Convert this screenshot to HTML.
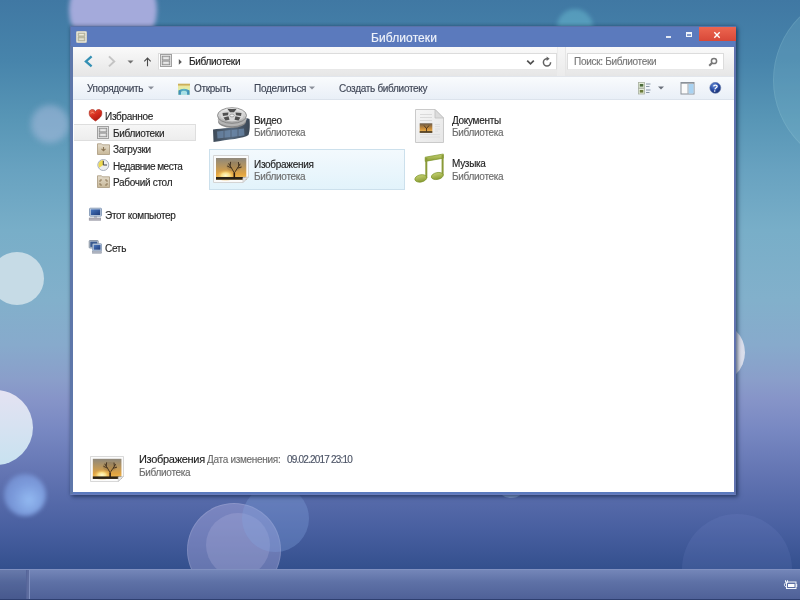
<!DOCTYPE html>
<html><head><meta charset="utf-8">
<style>
*{margin:0;padding:0;box-sizing:border-box}
html,body{width:800px;height:600px;overflow:hidden}
body{position:relative;font-family:"Liberation Sans",sans-serif;
background:linear-gradient(to bottom,#4078a3 0px,#4784ab 60px,#5896b6 120px,#68a2c0 170px,#78aec8 230px,#82b0cb 300px,#87aacc 345px,#8a9eca 380px,#8694c8 400px,#7888c2 430px,#6274b2 475px,#485fa0 530px,#34508e 568px)}
.a{position:absolute}
.t{position:absolute;font-size:10px;line-height:10px;letter-spacing:-0.3px;white-space:nowrap;color:#1e1e1e;will-change:transform;-webkit-text-stroke:0.15px currentColor}
.bk{position:absolute;border-radius:50%}
</style></head><body>

<!-- bokeh -->
<div class="bk" style="left:69px;top:-34px;width:88px;height:88px;background:#a4aadb;filter:blur(2px)"></div>
<div class="bk" style="left:31px;top:105px;width:38px;height:38px;background:rgba(205,205,240,0.38);filter:blur(3px)"></div>
<div class="bk" style="left:-10px;top:252px;width:54px;height:53px;background:#c6dbe6"></div>
<div class="bk" style="left:-42px;top:390px;width:75px;height:75px;background:linear-gradient(#e4e2f2,#c8e2f0)"></div>
<div class="bk" style="left:4px;top:474px;width:42px;height:42px;background:radial-gradient(circle at 60% 62%,rgba(150,190,245,0.95) 0%,rgba(135,170,235,0.75) 45%,rgba(120,150,220,0.45) 100%);filter:blur(2px)"></div>
<div class="bk" style="left:557px;top:9px;width:36px;height:36px;background:rgba(110,195,215,0.45);filter:blur(2px)"></div>
<div class="bk" style="left:773px;top:-9px;width:178px;height:178px;background:rgba(140,200,215,0.2);box-shadow:inset 0 0 0 1px rgba(200,235,240,0.12)"></div>
<div class="bk" style="left:684px;top:322px;width:61px;height:61px;background:radial-gradient(circle at 40% 50%,#e4e6f0 60%,#c8d0e4 100%)"></div>
<div class="bk" style="left:682px;top:514px;width:110px;height:110px;background:rgba(140,160,220,0.12)"></div>
<div class="bk" style="left:187px;top:503px;width:94px;height:94px;background:rgba(190,185,235,0.36);box-shadow:inset 0 0 0 1px rgba(255,255,255,0.12)"></div>
<div class="bk" style="left:206px;top:513px;width:64px;height:64px;background:rgba(215,210,245,0.18)"></div>
<div class="bk" style="left:242px;top:485px;width:67px;height:67px;background:rgba(130,165,225,0.32)"></div>

<div class="bk" style="left:497px;top:474px;width:28px;height:24px;background:rgba(170,200,235,0.5)"></div>
<!-- taskbar -->
<div class="a" style="left:0;top:569px;width:800px;height:31px;background:linear-gradient(#7486b8,#5e71a6 40%,#4e6097);border-top:1px solid #8090c0"></div>
<div class="a" style="left:0;top:570px;width:26px;height:29px;background:rgba(20,30,70,0.12)"></div>
<div class="a" style="left:26px;top:570px;width:1px;height:29px;background:#56659a"></div>
<div class="a" style="left:27px;top:570px;width:2px;height:29px;background:#5d6c9e"></div>
<div class="a" style="left:29px;top:570px;width:1px;height:29px;background:#7f8fbf"></div>
<div class="a" style="left:0;top:599px;width:800px;height:1px;background:#2e3f70"></div>
<!-- battery -->
<svg class="a" style="left:783px;top:579px" width="16" height="12" viewBox="0 0 16 12">
<rect x="3.5" y="3" width="9.5" height="6.5" fill="none" stroke="#f4f6fb" stroke-width="1"/>
<rect x="5" y="5" width="6.5" height="3" fill="#fff"/>
<rect x="13" y="5" width="1.2" height="3" fill="#e8ecf6"/>
<path d="M2.5 1.2v2.2M4.5 1.2v2.2M4.8 3.6C2.6 3.4 1.4 4.4 1.4 5.8C1.4 7.2 2.6 8 4.2 8" stroke="#f0f4fa" stroke-width="1" fill="none"/>
</svg>

<!-- window shadow -->
<div class="a" style="left:70px;top:26px;width:666px;height:469px;box-shadow:2px 2px 4px rgba(10,30,60,0.55),0 -1px 3px rgba(10,30,60,0.25)"></div>
<!-- window frame -->
<div class="a" style="left:70px;top:26px;width:666px;height:469px;background:#5b7abd;border:1px solid #5a72a8;border-bottom:1px solid #6a7cbc"></div>
<!-- title icon -->
<svg class="a" style="left:76px;top:31px" width="11" height="12" viewBox="0 0 11 12">
<rect x="0.5" y="0.5" width="10" height="11" rx="0.8" fill="#eeeee6" stroke="#d0d0c4"/>
<rect x="2" y="2" width="7" height="3.6" fill="#c4c2aa" stroke="#a8a690" stroke-width="0.6"/>
<rect x="2" y="6.4" width="7" height="3.6" fill="#c4c2aa" stroke="#a8a690" stroke-width="0.6"/>
<rect x="3.2" y="3.2" width="4.6" height="1" fill="#f4f4ea"/>
<rect x="3.2" y="7.6" width="4.6" height="1" fill="#f4f4ea"/>
</svg>
<div class="t" style="left:371px;top:32px;color:#eef2fa;font-size:12px;line-height:12px;letter-spacing:0.1px">Библиотеки</div>
<!-- min max close -->
<div class="a" style="left:666px;top:36px;width:5px;height:2px;background:#f0f4fa;opacity:.9"></div>
<div class="a" style="left:686px;top:32px;width:6px;height:5px;border:1px solid #f0f4fa;border-top-width:2px;background:rgba(255,255,255,0.25)"></div>
<div class="a" style="left:699px;top:27px;width:37px;height:14px;background:linear-gradient(#ec6650,#d84838)"></div>
<svg class="a" style="left:713px;top:31px" width="8" height="8" viewBox="0 0 8 8"><path d="M1.3 1.3L6.7 6.7M6.7 1.3L1.3 6.7" stroke="#fff" stroke-width="1.4"/></svg>

<div class="a" style="left:70px;top:46px;width:3px;height:448px;background:#5e77aa"></div>
<div class="a" style="left:734px;top:46px;width:2px;height:448px;background:#6072ae"></div>
<!-- client -->
<div class="a" style="left:73px;top:47px;width:661px;height:445px;background:#fff"></div>
<!-- address row -->
<div class="a" style="left:73px;top:47px;width:661px;height:29px;background:linear-gradient(#fafafa,#f2f2f2 40%,#e6e6e6)"></div>
<div class="a" style="left:73px;top:76px;width:661px;height:24px;background:linear-gradient(#f9fbfd,#e9eff7);border-top:1px solid #e2e6ec;border-bottom:1px solid #dce3ec"></div>

<!-- nav arrows -->
<svg class="a" style="left:83px;top:55px" width="12" height="13" viewBox="0 0 12 13"><path d="M8.6 1.4L2.9 6.4L8.6 11.4" stroke="#3490b4" stroke-width="2.3" fill="none"/></svg>
<svg class="a" style="left:106px;top:55px" width="12" height="13" viewBox="0 0 12 13"><path d="M3 1.4L8.2 6.4L3 11.4" stroke="#c4c4c4" stroke-width="2" fill="none"/></svg>
<svg class="a" style="left:127px;top:60px" width="7" height="4" viewBox="0 0 7 4"><path d="M0.5 0.5h6L3.5 3.5z" fill="#707070"/></svg>
<svg class="a" style="left:143px;top:56px" width="10" height="12" viewBox="0 0 10 12"><path d="M4.5 10.3V2M1.3 5.3L4.5 2.1L7.7 5.3" stroke="#4a4a4a" stroke-width="1.1" fill="none"/></svg>

<!-- address box -->
<div class="a" style="left:158px;top:53px;width:399px;height:17px;background:#fff;border:1px solid #dcdcdc;border-bottom-color:#e8e8e8"></div>
<svg class="a" style="left:160px;top:54px" width="12" height="13" viewBox="0 0 12 13">
<rect x="0.5" y="0.5" width="11" height="12" fill="#ececec" stroke="#a0a0a0"/>
<rect x="2.2" y="2.2" width="7.6" height="3.8" fill="#cfcfcf" stroke="#858585" stroke-width="0.8"/>
<rect x="2.2" y="7" width="7.6" height="3.8" fill="#cfcfcf" stroke="#858585" stroke-width="0.8"/>
<rect x="3.6" y="3.6" width="4.8" height="1" fill="#fafafa"/>
<rect x="3.6" y="8.4" width="4.8" height="1" fill="#fafafa"/>
</svg>
<svg class="a" style="left:178px;top:58px" width="5" height="8" viewBox="0 0 5 8"><path d="M0.8 1L3.8 3.9L0.8 6.8z" fill="#5a5a5a"/></svg>
<div class="t" style="left:189px;top:57px">Библиотеки</div>
<svg class="a" style="left:526px;top:59px" width="9" height="7" viewBox="0 0 9 7"><path d="M1.2 1.6L4.5 4.9L7.8 1.6" stroke="#505050" stroke-width="1.7" fill="none"/></svg>
<svg class="a" style="left:542px;top:56px" width="10" height="11" viewBox="0 0 10 11">
<path d="M5 2.7A3.6 3.6 0 1 0 8.6 6.3" stroke="#626262" stroke-width="1.5" fill="none"/>
<path d="M4.6 0.4L7.6 2.7L4.6 5z" fill="#626262"/></svg>
<div class="a" style="left:557px;top:47px;width:9px;height:29px;background:linear-gradient(#f6f6f6,#ebebeb);border-left:1px solid #ececec;border-right:1px solid #e6e6e6"></div>
<!-- search -->
<div class="a" style="left:567px;top:53px;width:157px;height:17px;background:#fff;border:1px solid #dcdcdc;border-bottom-color:#e8e8e8"></div>
<div class="t" style="left:574px;top:57px;color:#777">Поиск: Библиотеки</div>
<svg class="a" style="left:708px;top:57px" width="10" height="10" viewBox="0 0 10 10"><circle cx="6" cy="4" r="2.6" stroke="#777" stroke-width="1.5" fill="none"/><path d="M4.2 5.8L1.2 8.8" stroke="#777" stroke-width="2"/></svg>

<!-- toolbar -->
<div class="t" style="left:87px;top:84px;color:#3f4656">Упорядочить</div>
<svg class="a" style="left:148px;top:86px" width="6" height="4" viewBox="0 0 6 4"><path d="M0 0.5h6L3 3.5z" fill="#8a8f99"/></svg>
<svg class="a" style="left:177px;top:83px" width="14" height="13" viewBox="0 0 14 13">
<defs><linearGradient id="opf" x1="0" y1="0" x2="0" y2="1"><stop offset="0" stop-color="#d8c070"/><stop offset="0.25" stop-color="#ece8a0"/><stop offset="0.6" stop-color="#d8f0b0"/><stop offset="1" stop-color="#c8e8c0"/></linearGradient>
<linearGradient id="arch" x1="0" y1="0" x2="1" y2="0"><stop offset="0" stop-color="#3a88b8"/><stop offset="0.5" stop-color="#60b8c8"/><stop offset="1" stop-color="#3a88b8"/></linearGradient></defs>
<rect x="1" y="0.8" width="12" height="11" fill="url(#opf)"/>
<rect x="1" y="0.8" width="12" height="1.6" fill="#c8a850" opacity="0.8"/>
<path d="M1.5 11.8V7.5Q7 3.8 12.5 7.5V11.8H10V9Q7 7.2 4 9V11.8z" fill="url(#arch)"/>
<path d="M4 11.8V9Q7 7.2 10 9V11.8z" fill="#a8e0e8"/>
</svg>
<div class="t" style="left:194px;top:84px;color:#3f4656">Открыть</div>
<div class="t" style="left:254px;top:84px;color:#3f4656">Поделиться</div>
<svg class="a" style="left:309px;top:86px" width="6" height="4" viewBox="0 0 6 4"><path d="M0 0.5h6L3 3.5z" fill="#8a8f99"/></svg>
<div class="t" style="left:339px;top:84px;color:#3f4656">Создать библиотеку</div>
<!-- right toolbar icons -->
<svg class="a" style="left:638px;top:82px" width="14" height="13" viewBox="0 0 14 13">
<rect x="0.5" y="0.5" width="6" height="5.5" fill="#e4ecd8" stroke="#a8b0a0" stroke-width="0.8"/>
<rect x="0.5" y="6.5" width="6" height="5.5" fill="#e4ecd8" stroke="#a8b0a0" stroke-width="0.8"/>
<rect x="1.8" y="2" width="3.5" height="2.6" fill="#4a6a3a"/>
<rect x="1.8" y="8" width="3.5" height="2.6" fill="#6a7a3a"/>
<path d="M8 2h4.5M8 4.5h3.5M8 8h4.5M8 10.5h3.5" stroke="#8a98a8" stroke-width="1"/>
</svg>
<svg class="a" style="left:658px;top:86px" width="6" height="4" viewBox="0 0 6 4"><path d="M0 0.5h6L3 3.5z" fill="#6a707a"/></svg>
<svg class="a" style="left:680px;top:82px" width="15" height="13" viewBox="0 0 15 13">
<rect x="1" y="0.5" width="13" height="11.5" fill="#fafafa" stroke="#8a9098"/>
<rect x="1" y="0.5" width="13" height="1.2" fill="#8a9098"/>
<rect x="8.5" y="2" width="5" height="9.5" fill="#a8d2f2"/>
<path d="M8 2v10" stroke="#a0a8b0"/>
</svg>
<svg class="a" style="left:709px;top:82px" width="13" height="12" viewBox="0 0 13 12">
<defs><radialGradient id="hlp" cx="0.4" cy="0.3" r="0.7"><stop offset="0" stop-color="#6a90d8"/><stop offset="0.55" stop-color="#2a4ea8"/><stop offset="1" stop-color="#1a3070"/></radialGradient></defs>
<circle cx="6.3" cy="5.8" r="5.5" fill="url(#hlp)" stroke="#6a80b0" stroke-width="0.6"/>
<path d="M4.6 4.4C4.8 2.8 8.4 2.6 8.1 4.6C7.9 5.8 6.3 5.8 5.9 7.3" stroke="#fff" stroke-width="1.3" fill="none"/>
<circle cx="5.7" cy="9" r="0.8" fill="#fff"/>
</svg>

<!-- nav pane -->
<svg class="a" style="left:88px;top:109px" width="15" height="13" viewBox="0 0 15 13">
<defs><linearGradient id="hrt" x1="0" y1="0" x2="0.6" y2="1"><stop offset="0" stop-color="#f07050"/><stop offset="0.5" stop-color="#d83020"/><stop offset="1" stop-color="#b01810"/></linearGradient></defs>
<path d="M7.5 12C4 9.6 1.2 7.5 1.2 4.4A3 3 0 0 1 7.5 3A3 3 0 0 1 13.8 4.4C13.8 7.5 11 9.6 7.5 12z" fill="url(#hrt)" stroke="#a82418" stroke-width="0.6"/>
<path d="M3 4.5C3.5 3 5.5 3 6 4.5" stroke="#ffb090" stroke-width="1" fill="none" opacity="0.8"/>
</svg>
<div class="t" style="left:105px;top:112px;color:#262626">Избранное</div>
<div class="a" style="left:74px;top:124px;width:122px;height:17px;background:linear-gradient(#f6f6f6,#ededed);border:1px solid #dedede;border-left:none"></div>
<svg class="a" style="left:97px;top:126px" width="12" height="13" viewBox="0 0 12 13">
<rect x="0.5" y="0.5" width="11" height="12" fill="#ececec" stroke="#a0a0a0"/>
<rect x="2.2" y="2.2" width="7.6" height="3.8" fill="#cfcfcf" stroke="#858585" stroke-width="0.8"/>
<rect x="2.2" y="7" width="7.6" height="3.8" fill="#cfcfcf" stroke="#858585" stroke-width="0.8"/>
<rect x="3.6" y="3.6" width="4.8" height="1" fill="#fafafa"/>
<rect x="3.6" y="8.4" width="4.8" height="1" fill="#fafafa"/>
</svg>
<div class="t" style="left:113px;top:129px;color:#262626">Библиотеки</div>
<svg class="a" style="left:97px;top:143px" width="13" height="12" viewBox="0 0 13 12">
<defs><linearGradient id="fld" x1="0" y1="0" x2="0" y2="1"><stop offset="0" stop-color="#e4dccc"/><stop offset="1" stop-color="#c8b898"/></linearGradient></defs>
<path d="M0.5 0.8h4l1 1h7v9.7h-12z" fill="url(#fld)" stroke="#a8987c" stroke-width="0.8"/>
<path d="M6.5 4v3.5M4.5 5.8L6.5 7.8L8.5 5.8" stroke="#8a7454" stroke-width="1.1" fill="none"/>
</svg>
<div class="t" style="left:113px;top:145px;color:#262626">Загрузки</div>
<svg class="a" style="left:97px;top:159px" width="13" height="12" viewBox="0 0 13 12">
<circle cx="6.3" cy="6" r="5.5" fill="#eceef0" stroke="#a0a8b4" stroke-width="0.9"/>
<path d="M6.3 6L6.3 1A5 5 0 0 0 2.2 8.8z" fill="#ecd850"/>
<path d="M6.3 6V1.8M6.3 6H10" stroke="#404040" stroke-width="1"/>
</svg>
<div class="t" style="left:113px;top:162px;color:#262626;letter-spacing:-0.5px">Недавние места</div>
<svg class="a" style="left:97px;top:175px" width="13" height="13" viewBox="0 0 13 13">
<path d="M0.5 0.8h4l1 1h7v10.7h-12z" fill="url(#fld)" stroke="#a8987c" stroke-width="0.8"/>
<path d="M3 5h2M3 5v2M10 5h-2M10 5v2M3 10h2M3 10v-2M10 10h-2M10 10v-2" stroke="#8a7454" stroke-width="0.9"/>
</svg>
<div class="t" style="left:113px;top:178px;color:#262626">Рабочий стол</div>

<svg class="a" style="left:88px;top:207px" width="14" height="14" viewBox="0 0 14 14">
<defs><linearGradient id="scr" x1="0" y1="0" x2="1" y2="1"><stop offset="0" stop-color="#4a78c0"/><stop offset="1" stop-color="#1e3a78"/></linearGradient></defs>
<rect x="1.5" y="1.2" width="12" height="8" rx="0.8" fill="#c4d0e0" stroke="#7890b0" stroke-width="0.8"/>
<rect x="2.8" y="2.4" width="9.4" height="5.6" fill="url(#scr)"/>
<rect x="6" y="9.3" width="3" height="1.2" fill="#9098a8"/>
<rect x="1.2" y="11" width="11.5" height="2.2" fill="#b8b4bc" stroke="#8a8a98" stroke-width="0.6"/>
</svg>
<div class="t" style="left:105px;top:211px;color:#262626">Этот компьютер</div>
<svg class="a" style="left:88px;top:240px" width="14" height="14" viewBox="0 0 14 14">
<rect x="1.2" y="0.5" width="9" height="7.5" rx="0.6" fill="#c0c8d4" stroke="#7a8898" stroke-width="0.8"/>
<rect x="2.3" y="1.6" width="6.8" height="5.3" fill="#3a5a90"/>
<rect x="4.6" y="3.8" width="9" height="7" rx="0.6" fill="#c8d4e4" stroke="#7890b0" stroke-width="0.8"/>
<rect x="5.7" y="4.9" width="6.8" height="4.8" fill="url(#scr)"/>
<rect x="4.5" y="11.6" width="9" height="1.6" fill="#b0b4c0" stroke="#8890a0" stroke-width="0.5"/>
</svg>
<div class="t" style="left:105px;top:244px;color:#262626">Сеть</div>

<!-- content items -->
<svg class="a" style="left:208px;top:104px" width="44" height="40" viewBox="0 0 44 40">
<defs>
<linearGradient id="strip" x1="0" y1="0" x2="1" y2="0"><stop offset="0" stop-color="#3e4a58"/><stop offset="0.5" stop-color="#56687c"/><stop offset="1" stop-color="#3a4654"/></linearGradient>
<linearGradient id="reel" x1="0" y1="0" x2="0" y2="1"><stop offset="0" stop-color="#f2f2f2"/><stop offset="1" stop-color="#a8a8a8"/></linearGradient>
</defs>
<path d="M5 25.5C14 24.5 27 23.5 33 21.5C37 19.5 38.5 17 38.5 14L41.5 15C42 20 42 27 40.5 31C36 34.5 20 35.5 5.5 38z" fill="url(#strip)"/>
<path d="M9 27.5L36 24.5L36.5 31.5L9.5 34.5z" fill="#7a9cc4" opacity="0.55"/>
<path d="M16 26.5v7.5M23 26v7.5M30 25v7.5" stroke="#4a5868" stroke-width="0.7"/>
<ellipse cx="24" cy="17.5" rx="14" ry="6.5" fill="#8a8a8a"/>
<ellipse cx="24" cy="15.5" rx="14.2" ry="6.8" fill="#b4b4b4"/>
<ellipse cx="24" cy="11.5" rx="14.5" ry="7.8" fill="url(#reel)" stroke="#7a7a7a" stroke-width="0.8"/>
<ellipse cx="24" cy="11.5" rx="11.5" ry="5.8" fill="#d8d8d8"/>
<ellipse cx="24" cy="11.5" rx="2.2" ry="1.4" fill="#f4f4f4" stroke="#777" stroke-width="0.6"/>
<path d="M14.5 9L20.5 8.5L20 11.3L15 12z M27.5 8.5L33.5 9L33 12L28 11.3z M19.5 5L28.5 5L26 8.3L22 8.3z M15.5 13.5L20.5 12.3L21.5 15.8L17.5 16.5z M27.5 12.3L32.5 13.5L30.5 16.5L26.5 15.8z" fill="#505050"/>
</svg>
<div class="t" style="left:254px;top:116px;color:#1e1e1e">Видео</div>
<div class="t" style="left:254px;top:128px;color:#6d6d6d">Библиотека</div>

<svg class="a" style="left:415px;top:109px" width="30" height="34" viewBox="0 0 30 34">
<defs><linearGradient id="pg" x1="0" y1="0" x2="1" y2="1"><stop offset="0" stop-color="#f6f6f6"/><stop offset="1" stop-color="#e6e6e6"/></linearGradient>
<linearGradient id="sky2" x1="0" y1="0" x2="0" y2="1"><stop offset="0" stop-color="#6a5a48"/><stop offset="0.6" stop-color="#d09038"/><stop offset="1" stop-color="#f0c060"/></linearGradient></defs>
<path d="M0.5 0.5h19.5l8.5 8.5v24.5h-28z" fill="url(#pg)" stroke="#cacaca"/>
<path d="M20 0.5v8.5h8.5z" fill="#dcdcdc" stroke="#c0c0c0" stroke-width="0.8"/>
<path d="M5 5.5h12M5 8.5h12M5 11.5h12" stroke="#dadada" stroke-width="1"/>
<rect x="4.7" y="14.3" width="12.6" height="9.4" fill="url(#sky2)"/>
<rect x="4.7" y="22.3" width="12.6" height="1.4" fill="#2a2018"/>
<path d="M11.5 22.5V19M11.5 19.5L9 16.5M11.5 19.5L14 16.5" stroke="#3a2818" stroke-width="0.8" fill="none"/>
<path d="M20 15.5h5M20 17.5h5M20 20h5M20 22h3M5 25.5h20M5 28h20" stroke="#dcdcdc" stroke-width="0.9"/>
</svg>
<div class="t" style="left:452px;top:116px;color:#1e1e1e">Документы</div>
<div class="t" style="left:452px;top:128px;color:#6d6d6d">Библиотека</div>

<div class="a" style="left:209px;top:149px;width:196px;height:41px;background:linear-gradient(#f3f9fd,#e2f3fb);border:1px solid #cce0ec"></div>
<svg class="a" style="left:213px;top:155px" width="36" height="28" viewBox="0 0 36 28">
<defs>
<linearGradient id="sky" x1="0" y1="0" x2="0" y2="1"><stop offset="0" stop-color="#8e887c"/><stop offset="0.4" stop-color="#b8965e"/><stop offset="0.75" stop-color="#e2a440"/><stop offset="1" stop-color="#f2c460"/></linearGradient>
<radialGradient id="sun" cx="0.5" cy="0.5" r="0.5"><stop offset="0" stop-color="#fffad0"/><stop offset="0.45" stop-color="#ffe890" stop-opacity="0.9"/><stop offset="1" stop-color="#f0b040" stop-opacity="0"/></radialGradient>
</defs>
<path d="M0.5 0.5h35v21.5l-5.5 5.5h-29.5z" fill="#fbfbfb" stroke="#d4d4d4"/>
<rect x="3" y="3" width="30.3" height="21.7" fill="url(#sky)"/>
<ellipse cx="12.6" cy="20.5" rx="9" ry="6" fill="url(#sun)"/>
<rect x="3" y="22" width="30.3" height="2.7" fill="#2c2418"/>
<ellipse cx="21" cy="11.5" rx="7.5" ry="5" fill="#3a2818" opacity="0.12"/><path d="M21.3 18L18.6 13.2L15.6 8.4M18.6 13.2L14.2 11M17.2 10.8L17.6 6.8M21.3 18L24.4 13.2L27.2 8.8M24.4 13.2L28.6 12M25.8 11L25.4 7" stroke="#3a2a1a" stroke-width="0.9" fill="none"/>
<path d="M21.3 23V18" stroke="#2a1a10" stroke-width="1.6"/>
<path d="M30 27.5l5.5-5.5c-2 0.3-4.5 0.3-5.5 0.5c-0.2 1.5 0 3.5 0 5z" fill="#e4e4e4" stroke="#c8c8c8" stroke-width="0.7"/>
</svg>
<div class="t" style="left:254px;top:160px;color:#1e1e1e">Изображения</div>
<div class="t" style="left:254px;top:172px;color:#6d6d6d">Библиотека</div>

<svg class="a" style="left:414px;top:153px" width="31" height="30" viewBox="0 0 31 30">
<defs><linearGradient id="gn" x1="0" y1="0" x2="0" y2="1"><stop offset="0" stop-color="#c4d070"/><stop offset="1" stop-color="#8a9c34"/></linearGradient></defs>
<path d="M11.2 4.2L29.3 1V5.2L11.2 8.4z" fill="url(#gn)" stroke="#7a9428" stroke-width="0.7"/>
<path d="M12.3 5v20" stroke="#8a9a38" stroke-width="2"/>
<path d="M28.6 2v20.5" stroke="#8a9a38" stroke-width="2"/>
<ellipse cx="6.8" cy="25.4" rx="6" ry="3.6" transform="rotate(-12 6.8 25.4)" fill="url(#gn)" stroke="#7a9428" stroke-width="0.7"/>
<ellipse cx="23.3" cy="23" rx="6" ry="3.4" transform="rotate(-12 23.3 23)" fill="url(#gn)" stroke="#7a9428" stroke-width="0.7"/>
</svg>
<div class="t" style="left:452px;top:159px;color:#1e1e1e">Музыка</div>
<div class="t" style="left:452px;top:172px;color:#6d6d6d">Библиотека</div>

<!-- details pane -->
<svg class="a" style="left:90px;top:456px" width="34" height="26" viewBox="0 0 36 28" preserveAspectRatio="none">
<path d="M0.5 0.5h35v21.5l-5.5 5.5h-29.5z" fill="#fbfbfb" stroke="#d4d4d4"/>
<rect x="3" y="3" width="30.3" height="21.7" fill="url(#sky)"/>
<ellipse cx="12.6" cy="20.5" rx="9" ry="6" fill="url(#sun)"/>
<rect x="3" y="22" width="30.3" height="2.7" fill="#2c2418"/>
<ellipse cx="21" cy="11.5" rx="7.5" ry="5" fill="#3a2818" opacity="0.12"/><path d="M21.3 18L18.6 13.2L15.6 8.4M18.6 13.2L14.2 11M17.2 10.8L17.6 6.8M21.3 18L24.4 13.2L27.2 8.8M24.4 13.2L28.6 12M25.8 11L25.4 7" stroke="#3a2a1a" stroke-width="0.9" fill="none"/>
<path d="M21.3 23V18" stroke="#2a1a10" stroke-width="1.6"/>
<path d="M30 27.5l5.5-5.5c-2 0.3-4.5 0.3-5.5 0.5c-0.2 1.5 0 3.5 0 5z" fill="#e4e4e4" stroke="#c8c8c8" stroke-width="0.7"/>
</svg>
<div class="t" style="left:139px;top:454px;color:#1e1e1e;font-size:11px;line-height:11px">Изображения</div>
<div class="t" style="left:207px;top:455px;color:#6d6d6d">Дата изменения:</div>
<div class="t" style="left:287px;top:455px;color:#4c5466;letter-spacing:-0.8px">09.02.2017 23:10</div>
<div class="t" style="left:139px;top:468px;color:#6d6d6d">Библиотека</div>

</body></html>
